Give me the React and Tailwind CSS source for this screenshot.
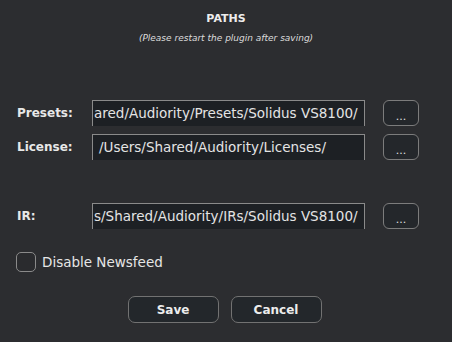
import { useState } from "react";

const font = { fontFamily: '"DejaVu Sans", Verdana, sans-serif' };

function PathRow({ label, value, clip }) {
  return (
    <div className="flex items-center h-[26px]">
      <span className="pl-[17px] text-[12px] font-bold text-[#e8e8e8] shrink-0" style={{ width: 92 }}>
        {label}
      </span>
      <div
        className={`w-[273px] h-full bg-[#1d2024] border-t border-l border-r border-[#8a8a8a] flex items-center overflow-hidden whitespace-nowrap text-[13.5px] text-[#e4e4e4] ${
          clip ? "pl-[1px]" : "pl-[6px]"
        }`}
      >
        <span className="shrink-0">{value}</span>
      </div>
      <button className="ml-[18px] w-[36px] h-full rounded-[6px] border border-[#7c7c7c] bg-[#24272b] text-[#e0e0e0] text-[11px] leading-none flex items-center justify-center pt-[7px]">
        ...
      </button>
    </div>
  );
}

export default function App() {
  const [checked, setChecked] = useState(false);
  return (
    <div className="w-[452px] h-[342px] bg-[#2c2d30] overflow-hidden flex flex-col" style={font}>
      <div className="pt-[12px] text-center text-[11px] leading-[14px] font-bold text-[#ececec]">PATHS</div>
      <div className="mt-[6px] text-center text-[9px] leading-[12px] italic text-[#dcdcdc]">
        (Please restart the plugin after saving)
      </div>

      <div className="mt-[56px] flex flex-col">
        <PathRow label="Presets:" value="ared/Audiority/Presets/Solidus VS8100/" clip />
        <div className="h-[8px]" />
        <PathRow label="License:" value="/Users/Shared/Audiority/Licenses/" />
        <div className="h-[43px]" />
        <PathRow label="IR:" value="s/Shared/Audiority/IRs/Solidus VS8100/" clip />
      </div>

      <label className="mt-[23px] ml-[16px] flex items-center gap-[6px] cursor-pointer">
        <span
          onClick={() => setChecked(!checked)}
          className="w-[20px] h-[20px] rounded-[5px] border border-[#8a8a8a] bg-[#2a2b2e] flex items-center justify-center text-[#e0e0e0] text-[12px]"
        >
          {checked ? "✓" : ""}
        </span>
        <span className="text-[13.5px] text-[#e6e6e6]">Disable Newsfeed</span>
      </label>

      <div className="mt-[24px] flex justify-center gap-[12px] pr-[3px]">
        <button className="w-[91px] h-[27px] rounded-[7px] border border-[#727272] bg-[#23272b] text-[12px] font-bold text-[#ececec]">
          Save
        </button>
        <button className="w-[91px] h-[27px] rounded-[7px] border border-[#727272] bg-[#23272b] text-[12px] font-bold text-[#ececec]">
          Cancel
        </button>
      </div>
    </div>
  );
}
